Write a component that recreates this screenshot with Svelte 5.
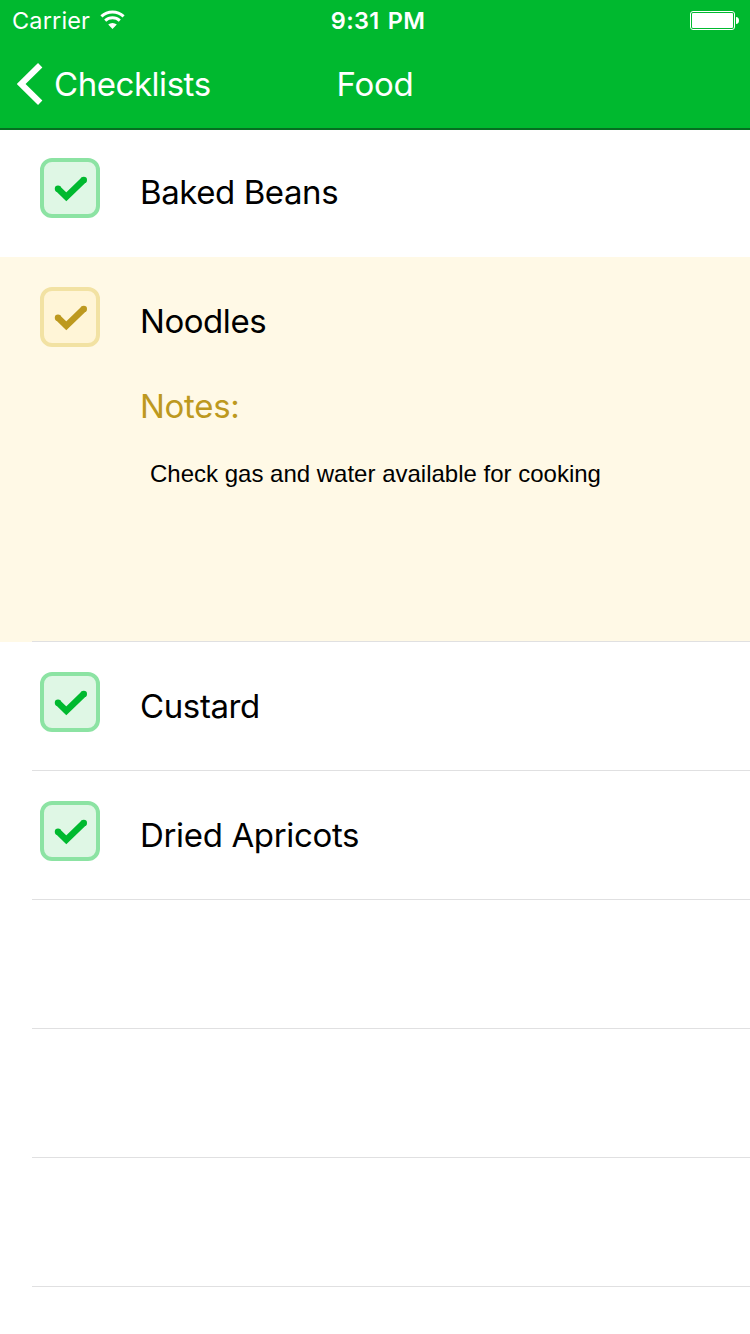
<script>
  const items = [
    { name: 'Baked Beans', spacing: -0.42 },
    { name: 'Noodles', spacing: -0.45, notes: 'Check gas and water available for cooking' },
    { name: 'Custard', spacing: -0.38 },
    { name: 'Dried Apricots', spacing: -0.34 },
  ];
  const emptyRows = [1, 2, 3];
</script>

<div class="screen">
  <header>
    <div class="status">
      <div class="carrier">
        <span>Carrier</span>
        <svg width="26" height="20" viewBox="0 0 26 20" fill="none" stroke="#fff">
          <path d="M1.400 6.400A16.400 16.400 0 0 1 23.600 6.400" stroke-width="3" />
          <path d="M5.200 10.600A11 11 0 0 1 19.800 10.600" stroke-width="3" />
          <path d="M8.200 14.600A6.300 6.300 0 0 1 16.800 14.600L12.500 19Z" fill="#fff" stroke="none" />
        </svg>
      </div>
      <span class="time">9:31 PM</span>
      <svg class="battery" width="50" height="20" viewBox="0 0 50 20">
        <rect x="0.5" y="0.5" width="44" height="18" rx="2.500" fill="none" stroke="#fff" />
        <rect x="2" y="2" width="41" height="15" rx="1" fill="#fff" />
        <path d="M46 6C48 6 49 7.500 49 9.500S48 13 46 13Z" fill="#fff" />
      </svg>
    </div>
    <nav>
      <div class="back">
        <svg width="26" height="42" viewBox="0 0 26 42">
          <path d="M23.200 2.200L4.100 21L23.200 39.800" fill="none" stroke="#fff" stroke-width="6.200" />
        </svg>
        <span>Checklists</span>
      </div>
      <h1>Food</h1>
    </nav>
  </header>
  <main>
    {#each items as item}
      <section class="row" class:open={item.notes}>
        <div class="box">
          <svg width="60" height="60" viewBox="0 0 60 60" fill="none" stroke="currentColor" stroke-width="6.400">
            <path d="M18 30.800L26.300 38.700L43.800 21.900" />
            <g fill="currentColor" stroke="none">
              <circle cx="18" cy="30.800" r="3.200" />
              <circle cx="43.800" cy="21.900" r="3.200" />
            </g>
          </svg>
        </div>
        <div class="content">
          <div class="name" style="letter-spacing: {item.spacing}px">{item.name}</div>
          {#if item.notes}
            <div class="label">Notes:</div>
            <p>{item.notes}</p>
          {/if}
        </div>
      </section>
    {/each}
    {#each emptyRows as row (row)}
      <section class="row"></section>
    {/each}
  </main>
</div>

<style>
  :global(body) { margin: 0; background: #fff; }
  .screen {
    width: 750px;
    height: 1334px;
    overflow: hidden;
    background: #fff;
    color: #000;
    font-family: Inter, "Liberation Sans", sans-serif;
  }
  header {
    box-sizing: border-box;
    height: 130px;
    background: #00b92f;
    color: #fff;
    border-bottom: 2px solid #056f21;
  }
  .status {
    display: grid;
    grid-template-columns: 1fr auto 1fr;
    height: 40px;
    line-height: 42px;
    font-size: 23.5px;
  }
  .carrier {
    display: flex;
    padding-left: 12px;
    gap: 9px;
    letter-spacing: 0.15px;
  }
  .carrier span { width: 79px; }
  .carrier svg { margin-top: 10px; }
  .time { font-weight: 600; letter-spacing: 0.3px; word-spacing: 2px; margin-left: 6px; }
  .battery { justify-self: end; margin: 11px 10px 0 0; }
  nav {
    display: grid;
    grid-template-columns: 1fr auto 1fr;
    height: 88px;
    line-height: 88px;
    font-size: 33px;
  }
  .back {
    display: flex;
    align-items: center;
    gap: 11px;
    padding-left: 17px;
    letter-spacing: -0.45px;
  }
  h1 { margin: 0; font-size: 33px; font-weight: 400; letter-spacing: -0.2px; }
  .row {
    box-sizing: border-box;
    display: flex;
    height: 129px;
    padding: 30px 0 0 40px;
    background: linear-gradient(#e0e0e1, #e0e0e1) right bottom / 718px 1px no-repeat;
  }
  .row:first-child { height: 127px; padding-top: 28px; background: none; }
  .row.open { height: 385px; background-color: #fff9e6; }
  .box {
    box-sizing: border-box;
    flex: none;
    display: flex;
    align-items: center;
    justify-content: center;
    width: 60px;
    height: 60px;
    border: 4px solid #8ce3a3;
    border-radius: 12px;
    background: #dff7e5;
    color: #00b92f;
  }
  .box svg { flex: none; }
  .open .box { border-color: #f2e2a3; background: #fff5d7; color: #bd991f; }
  .content { padding-left: 40px; }
  .name, .label { font-size: 33px; line-height: 40px; white-space: nowrap; }
  .name { padding-top: 14px; }
  .label { margin-top: 45px; color: #bd991f; letter-spacing: -0.3px; }
  p {
    margin: 34px 0 0 10px;
    font-family: "Liberation Sans", Arial, sans-serif;
    font-size: 24px;
    line-height: 28px;
    white-space: nowrap;
  }
</style>
